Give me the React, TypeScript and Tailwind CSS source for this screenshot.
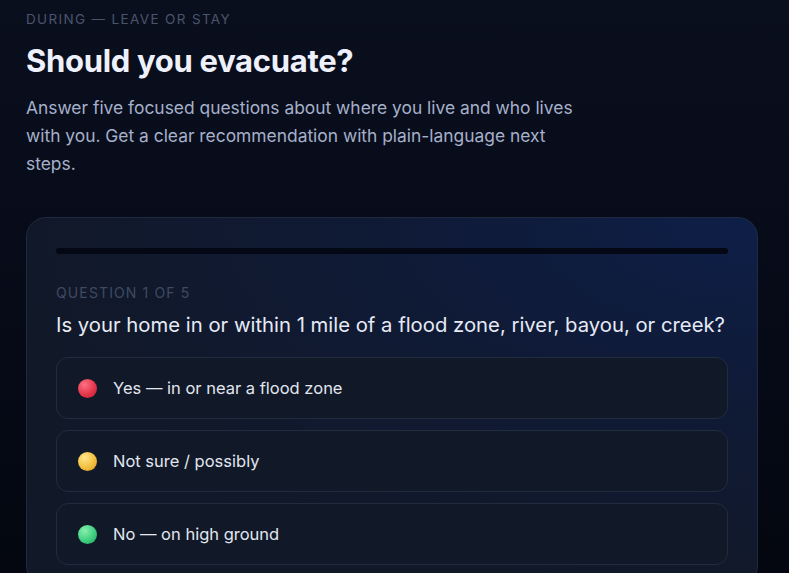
const options = [
  { label: 'Yes — in or near a flood zone', dot: 'bg-[radial-gradient(circle_at_35%_30%,#fb7185_0%,#e5364a_55%,#b91c35_100%)]' },
  { label: 'Not sure / possibly', dot: 'bg-[radial-gradient(circle_at_35%_30%,#fde68a_0%,#f4bf3f_55%,#d6951d_100%)]' },
  { label: 'No — on high ground', dot: 'bg-[radial-gradient(circle_at_35%_30%,#86efac_0%,#3fcf80_55%,#1f9d5f_100%)]' },
]

export default function App() {
  return (
    <div
      className="min-h-screen w-full overflow-hidden bg-[linear-gradient(180deg,#0a0f1e_0%,#060a17_60%,#04070f_100%)] px-[26px] pt-[10px]"
      style={{ fontFamily: 'Inter, "Noto Sans", sans-serif' }}
    >
      {/* Header */}
      <p className="text-[13.5px] uppercase leading-[18px] tracking-[0.1em] text-[#4a546b]">
        During — Leave or stay
      </p>
      <h1 className="mt-[15px] text-[31px] font-bold leading-[36px] tracking-[-0.01em] text-[#eef1fb]">
        Should you evacuate?
      </h1>
      <p className="mt-[15px] max-w-[570px] text-[17.4px] leading-[28px] text-[#a6b0ca]">
        Answer five focused questions about where you live and who lives with you. Get a clear
        recommendation with plain-language next steps.
      </p>

      {/* Quiz card */}
      <div className="mt-[39px] w-[732px] rounded-[20px] border border-[#1f2a40] bg-[radial-gradient(ellipse_at_100%_0%,#0e1f48_0%,#0f1a36_35%,#111827_75%)] px-[29px] pt-[30px] pb-[20px]">
        <div className="h-[6px] w-full rounded-full bg-[#040814]" />

        <p className="mt-[29px] text-[14px] uppercase leading-[20px] tracking-[0.08em] text-[#3f4a61]">
          Question 1 of 5
        </p>
        <h2 className="mt-[8px] text-[20.3px] leading-[28px] text-[#e6eaf5]">
          Is your home in or within 1 mile of a flood zone, river, bayou, or creek?
        </h2>

        <div className="mt-[18px] flex flex-col gap-[11px]">
          {options.map(o => (
            <button
              key={o.label}
              className="flex h-[62px] items-center gap-[16px] rounded-[12px] border border-[#222c3f] bg-[#111827] px-[21px] text-left"
            >
              <span className={`h-[19px] w-[19px] shrink-0 rounded-full ${o.dot}`} />
              <span className="text-[16.5px] text-[#e2e6f0]">{o.label}</span>
            </button>
          ))}
        </div>
      </div>
    </div>
  )
}
